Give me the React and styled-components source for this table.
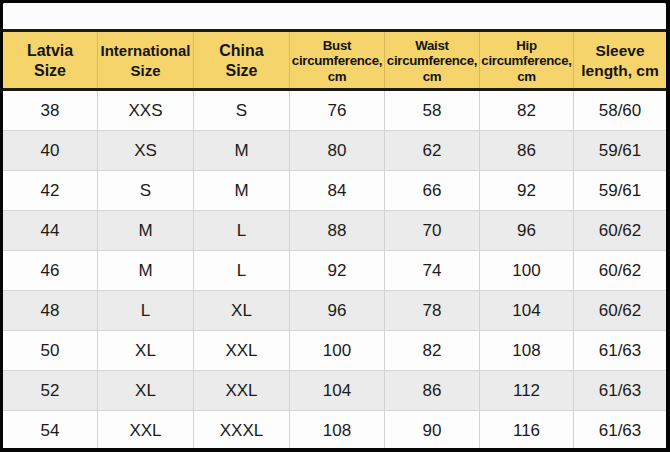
import styled, { createGlobalStyle } from "styled-components";

const GlobalStyle = createGlobalStyle`
  html, body {
    margin: 0;
    padding: 0;
    background: #000;
  }
`;

const COLUMNS = "94px 96px 96px 95px 95px 94px 93px";

const Frame = styled.div`
  width: 670px;
  height: 452px;
  box-sizing: border-box;
  background: #050505;
  padding: 3px 4px 4px 3px;
  overflow: hidden;
  font-family: "Liberation Sans", Arial, sans-serif;
`;

const Sheet = styled.div`
  background: #fdfdfd;
  height: 100%;
  border-radius: 2px 2px 0 0;
  display: flex;
  flex-direction: column;
  overflow: hidden;
`;

const TopBand = styled.div`
  height: 26px;
  flex-shrink: 0;
  background: #fcfcfc;
`;

const HeaderRow = styled.div`
  display: grid;
  grid-template-columns: ${COLUMNS};
  height: 56px;
  flex-shrink: 0;
  background: #f6d46c;
  border-top: 3px solid #1c1a14;
  border-bottom: 3px solid #1c1a14;
`;

const HeadCell = styled.div`
  display: flex;
  align-items: center;
  justify-content: center;
  text-align: center;
  font-weight: 700;
  color: #141414;
  font-size: ${(p) => p.size}px;
  line-height: ${(p) => p.lh}px;
  letter-spacing: ${(p) => p.ls || 0}px;
  padding-top: ${(p) => p.pt || 0}px;
  border-left: 1px solid #dcb75a;
  white-space: pre-line;
  &:first-child {
    border-left: none;
  }
`;

const Body = styled.div`
  display: flex;
  flex-direction: column;
  flex-shrink: 0;
`;

const Row = styled.div`
  display: grid;
  grid-template-columns: ${COLUMNS};
  height: 40px;
  flex-shrink: 0;
  box-sizing: border-box;
  border-bottom: 1px solid #d5d5d5;
  background: ${(p) => (p.shaded ? "#ebebeb" : "#fdfdfd")};
`;

const Cell = styled.div`
  display: flex;
  align-items: center;
  justify-content: center;
  font-size: 17px;
  color: #1b1b1b;
  border-left: 1px solid #d2d2d2;
  &:first-child {
    border-left: none;
  }
`;

const headers = [
  { text: "Latvia\nSize", size: 16, lh: 20, pt: 1 },
  { text: "International\nSize", size: 15, lh: 20, pt: 1 },
  { text: "China\nSize", size: 16, lh: 20, pt: 1 },
  { text: "Bust\ncircumference,\ncm", size: 13.3, lh: 15.5, ls: -0.3, pt: 2 },
  { text: "Waist\ncircumference,\ncm", size: 13.3, lh: 15.5, ls: -0.3, pt: 2 },
  { text: "Hip\ncircumference,\ncm", size: 13.3, lh: 15.5, ls: -0.3, pt: 2 },
  { text: "Sleeve\nlength, cm", size: 15.5, lh: 20, pt: 1 },
];

const rows = [
  ["38", "XXS", "S", "76", "58", "82", "58/60"],
  ["40", "XS", "M", "80", "62", "86", "59/61"],
  ["42", "S", "M", "84", "66", "92", "59/61"],
  ["44", "M", "L", "88", "70", "96", "60/62"],
  ["46", "M", "L", "92", "74", "100", "60/62"],
  ["48", "L", "XL", "96", "78", "104", "60/62"],
  ["50", "XL", "XXL", "100", "82", "108", "61/63"],
  ["52", "XL", "XXL", "104", "86", "112", "61/63"],
  ["54", "XXL", "XXXL", "108", "90", "116", "61/63"],
];

export default function App() {
  return (
    <>
      <GlobalStyle />
      <Frame>
        <Sheet>
          <TopBand />
          <HeaderRow>
            {headers.map((h) => (
              <HeadCell key={h.text} size={h.size} lh={h.lh} ls={h.ls} pt={h.pt}>
                {h.text}
              </HeadCell>
            ))}
          </HeaderRow>
          <Body>
            {rows.map((r, i) => (
              <Row key={r[0]} shaded={i % 2 === 1}>
                {r.map((v, j) => (
                  <Cell key={j}>{v}</Cell>
                ))}
              </Row>
            ))}
          </Body>
        </Sheet>
      </Frame>
    </>
  );
}
